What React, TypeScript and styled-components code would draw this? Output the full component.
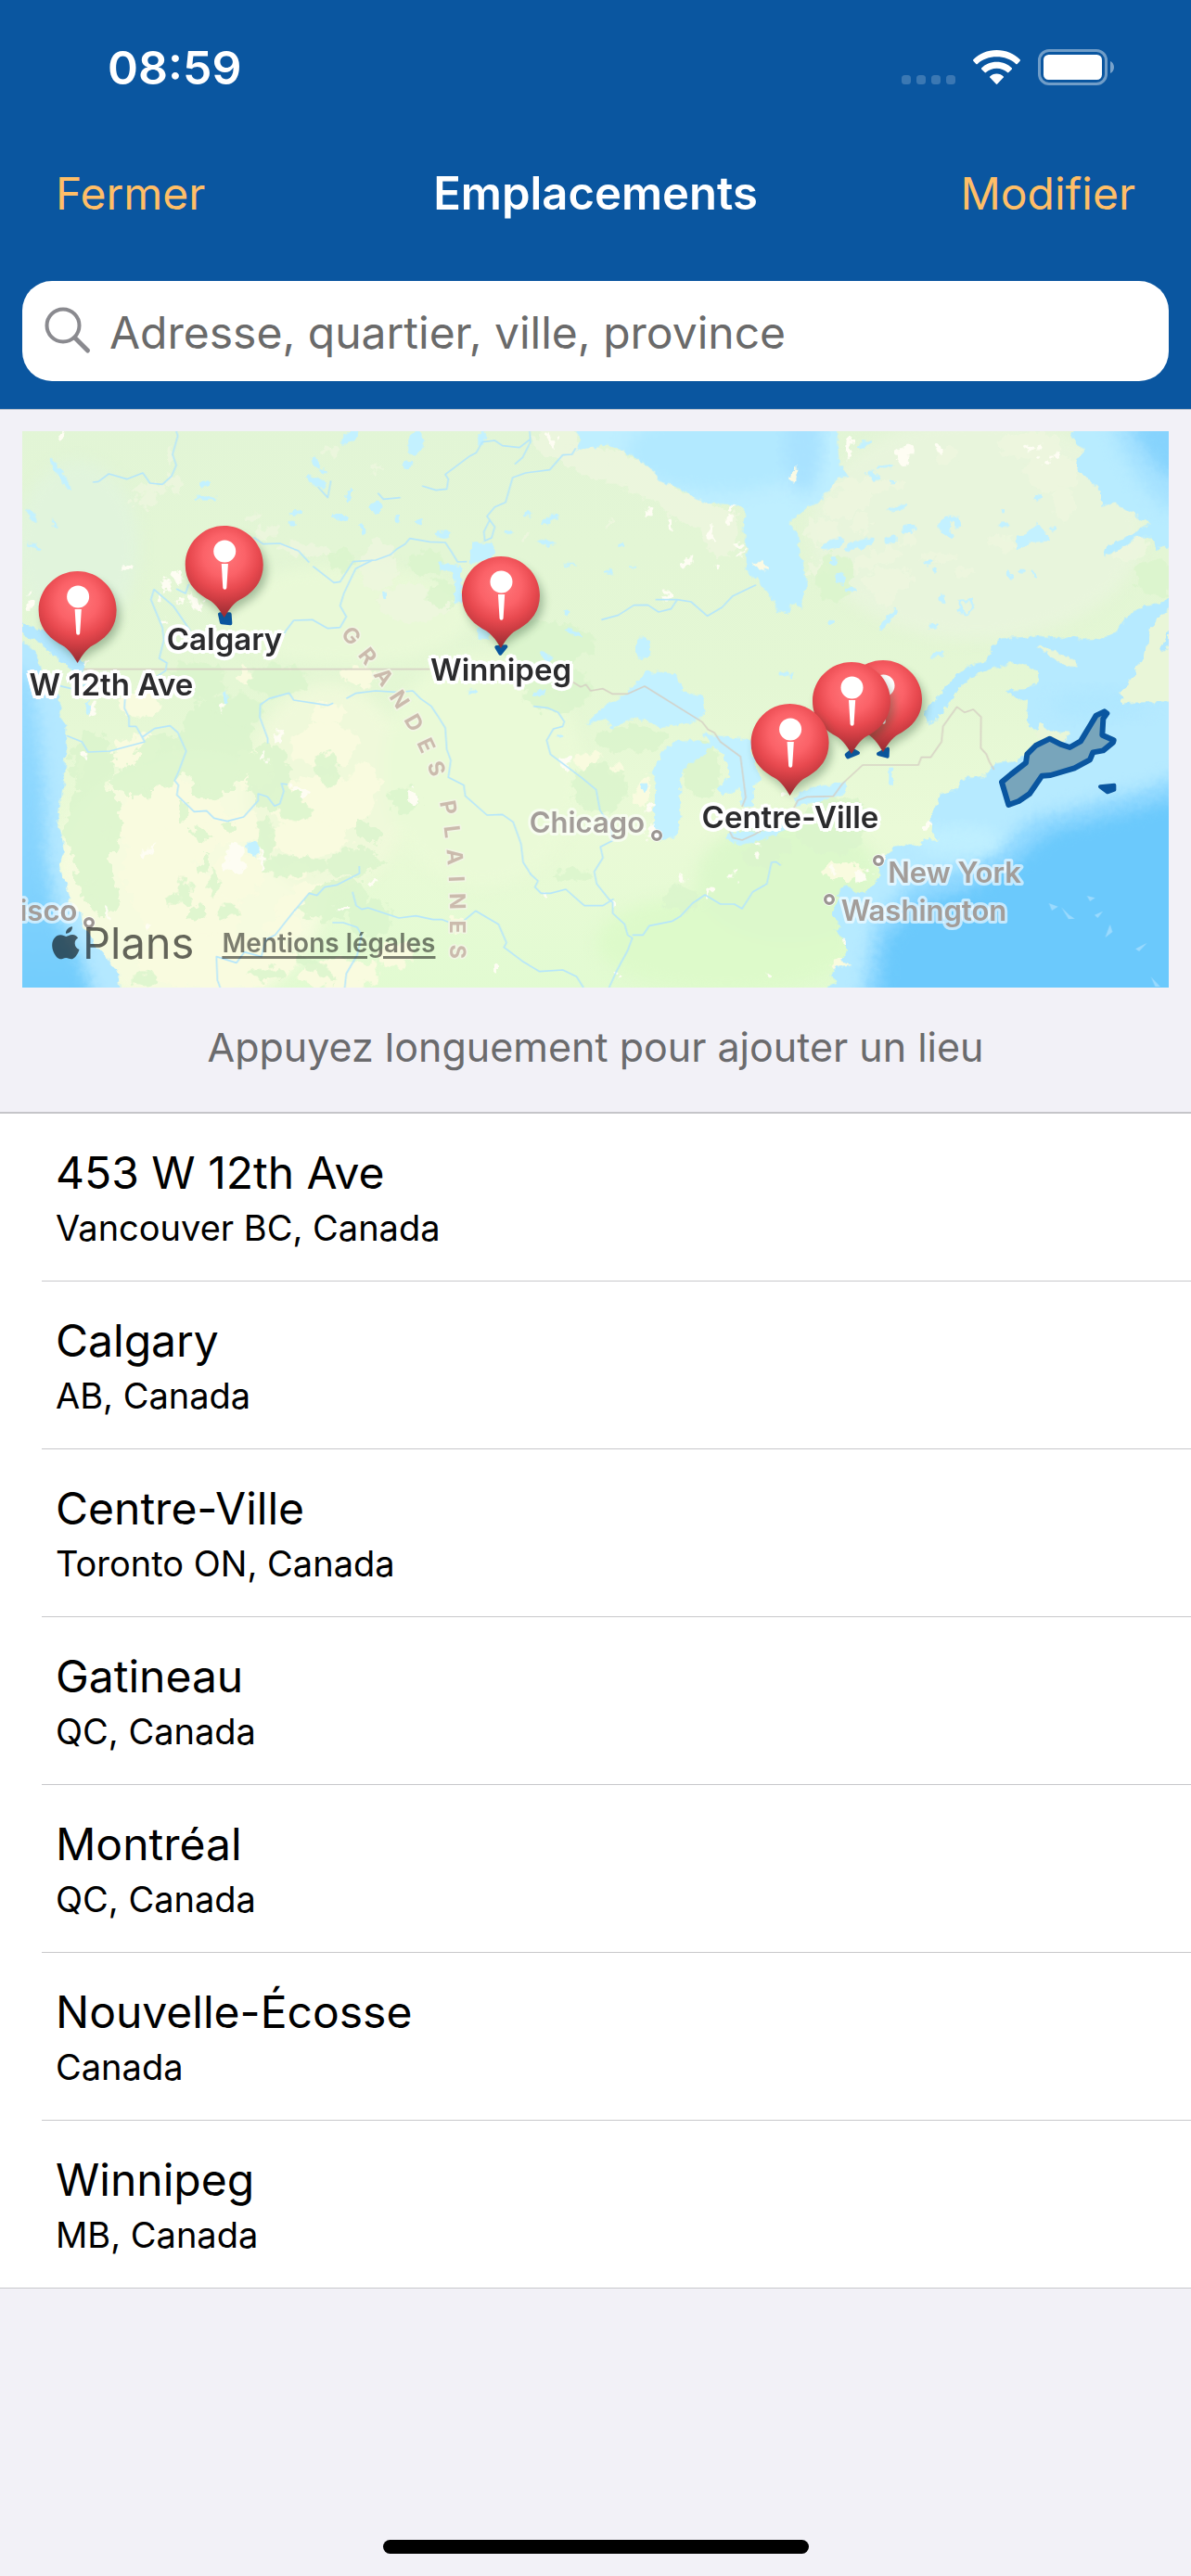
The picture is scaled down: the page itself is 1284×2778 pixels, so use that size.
import React from "react";
import styled, { createGlobalStyle } from "styled-components";

const GlobalStyle = createGlobalStyle`
  * { box-sizing: border-box; }
  body {
    margin: 0;
    background: #f2f1f7;
    font-family: Inter, "Liberation Sans", sans-serif;
    -webkit-font-smoothing: antialiased;
  }
  button, input { font: inherit; }
`;

const Screen = styled.main`
  display: flex;
  flex-direction: column;
  min-height: 100vh;
  background: #f2f1f7;
`;

const Header = styled.header`
  background: #0a56a0;
  border-bottom: 1px solid #b4bdcb;
  padding: 0 24px 30px;
`;

const StatusBar = styled.div`
  display: flex;
  justify-content: space-between;
  align-items: center;
  height: 144px;
  padding: 2px 58px 0 92px;
  color: #fff;
`;

const Clock = styled.time`
  font-size: 50px;
  font-weight: 600;
  line-height: 60px;
`;

const NavBar = styled.nav`
  display: grid;
  grid-template-columns: 1fr auto 1fr;
  align-items: center;
  height: 129px;
  margin-bottom: 30px;
  padding: 0 36px;
`;

const NavButton = styled.button<{ $end?: boolean }>`
  justify-self: ${(p) => (p.$end ? "end" : "start")};
  border: 0;
  padding: 0;
  background: none;
  color: #ffbe67;
  font-size: 48px;
  line-height: 60px;
  cursor: pointer;
`;

const Title = styled.h1`
  margin: 0;
  color: #fff;
  font-size: 49px;
  font-weight: 600;
  line-height: 60px;
`;

const SearchField = styled.label`
  display: flex;
  align-items: center;
  gap: 18px;
  height: 108px;
  padding: 0 24px;
  border-radius: 32px;
  background: #fff;
`;

const SearchInput = styled.input`
  flex: 1;
  min-width: 0;
  border: 0;
  outline: 0;
  padding: 3px 0 0;
  background: none;
  color: #000;
  font-size: 48px;
  line-height: 60px;
  &::placeholder { color: #6a6a6a; opacity: 1; }
`;

const MapSection = styled.section`
  padding: 23px 24px 0;
`;

const MapFrame = styled.div`
  position: relative;
  aspect-ratio: 1236 / 600;
  overflow: hidden;
`;

const MapCanvas = styled.svg`
  display: block;
  width: 100%;
  height: 100%;
`;

const Marker = styled.button<{ $x: number; $y: number }>`
  position: absolute;
  left: ${(p) => (p.$x / 1236) * 100}%;
  top: ${(p) => (p.$y / 600) * 100}%;
  transform: translateX(-50%);
  display: flex;
  flex-direction: column;
  align-items: center;
  border: 0;
  padding: 0;
  background: none;
  cursor: pointer;
`;

const MarkerLabel = styled.span`
  color: #2b2b2d;
  font-size: 33px;
  font-weight: 600;
  line-height: 46px;
  white-space: nowrap;
  text-shadow: 4px 0 #fff, -4px 0 #fff, 0 4px #fff, 0 -4px #fff, 3px 3px #fff,
    -3px 3px #fff, 3px -3px #fff, -3px -3px #fff, 0 0 3px #fff;
`;

const PartialLabel = styled(MarkerLabel)`
  padding-left: 72px;
`;

const Attribution = styled.div`
  position: absolute;
  left: 32px;
  bottom: 20px;
  display: flex;
  align-items: center;
  gap: 30px;
`;

const Brand = styled.span`
  display: flex;
  align-items: center;
  gap: 3px;
  color: rgba(0, 0, 0, 0.6);
  font-size: 47px;
  line-height: 56px;
`;

const LegalLink = styled.a`
  color: rgba(0, 0, 0, 0.5);
  font-size: 28px;
  font-weight: 600;
  line-height: 56px;
  text-decoration: underline;
  text-decoration-thickness: 3px;
  text-underline-offset: 4px;
`;

const Hint = styled.p`
  margin: 0;
  padding: 34px 24px 40px;
  color: #6b6b6d;
  font-size: 43px;
  line-height: 60px;
  text-align: center;
`;

const List = styled.ul`
  list-style: none;
  margin: 0;
  padding: 0;
  background: #fff;
  border-top: 2px solid #c5c5c9;
  border-bottom: 1px solid #c8c8cb;
`;

const Item = styled.li`
  margin-left: 45px;
  border-bottom: 1px solid #c8c8cb;
  &:last-child { border-bottom: 0; }
`;

const ItemButton = styled.button`
  display: block;
  width: 100%;
  border: 0;
  padding: 33px 15px 29px;
  background: none;
  color: #000;
  text-align: left;
  cursor: pointer;
`;

const ItemTitle = styled.span`
  display: block;
  font-size: 48px;
  line-height: 62px;
`;

const ItemSubtitle = styled.span`
  display: block;
  font-size: 38px;
  line-height: 56px;
`;

const HomeIndicator = styled.div`
  width: 459px;
  height: 15px;
  margin: auto auto 24px;
  border-radius: 8px;
  background: #000;
`;

/* ---------- icons ---------- */

const StatusIcons = () => (
  <svg width="230" height="40" viewBox="0 0 230 40" aria-hidden="true">
    <g fill="#fff" opacity="0.2">
      {[0, 16, 32, 48].map((x) => (
        <rect key={x} x={x} y="28" width="10" height="10" rx="3.5" />
      ))}
    </g>
    <g fill="#fff">
      <path d="M102.500 1C92.500 1 83.500 4.900 77.300 11.300Q76.700 12 77.300 12.700L80.300 15.900Q81 16.600 81.800 15.900C87.200 10.900 94.500 8.300 102.500 8.300S117.800 10.900 123.200 15.900Q124 16.600 124.700 15.900L127.700 12.700Q128.300 12 127.700 11.300C121.500 4.900 112.500 1 102.500 1Z" />
      <path d="M102.500 13.700C96 13.700 90.200 16.200 86.200 20.300Q85.600 21 86.200 21.700L89.600 25.100Q90.300 25.800 91 25.100C94 22.300 98 20.700 102.500 20.700S111 22.300 114 25.100Q114.700 25.800 115.400 25.100L118.800 21.700Q119.400 21 118.800 20.300C114.800 16.200 109 13.700 102.500 13.700Z" />
      <path d="M102.500 26.500C99.500 26.500 97 27.600 95.200 29.400Q94.700 30 95.200 30.600L101.800 37.600Q102.500 38.300 103.200 37.600L109.800 30.600Q110.300 30 109.800 29.400C108 27.600 105.500 26.500 102.500 26.500Z" />
      <rect x="153" y="6" width="63" height="27" rx="5.500" />
      <path opacity="0.45" d="M225 13C227.500 14 229 16.600 229 19.500S227.500 25 225 26Z" />
    </g>
    <rect x="148.500" y="1.500" width="72" height="36" rx="10.500" fill="none" stroke="#fff" strokeWidth="3" opacity="0.42" />
  </svg>
);

const SearchIcon = () => (
  <svg width="52" height="52" viewBox="0 0 52 52" fill="none" stroke="#8a8a8f" strokeLinecap="round" aria-hidden="true">
    <circle cx="20" cy="20" r="17.500" strokeWidth="4" />
    <path d="M33 33.500L46.500 47" strokeWidth="5" />
  </svg>
);

const AppleLogo = () => (
  <svg width="30" height="36" viewBox="0 0 30 36" fill="currentColor" aria-hidden="true">
    <path d="M22 0.300C22.300 4.300 18.900 8 15 7.700C14.600 4 18.200 0.700 22 0.300Z" />
    <path d="M28.100 12.500C25.500 14.100 24.600 16.100 24.700 18.500C24.800 21.600 26.600 23.800 29.500 25C28.500 28.300 25.600 34 22 35.200C19.500 35.800 17.900 34 15.200 34S10.900 35.700 8.600 35.300C4.500 34.300 0.400 27.200 0.200 21C0 14 4.300 9.400 9.200 9.300C11.800 9.300 13.700 10.900 15.300 10.900S19 9 22.200 9.100C24.800 9.300 26.700 10.400 28.100 12.500Z" />
  </svg>
);

const PinIcon = () => (
  <svg width="84" height="99" viewBox="0 0 84 99" overflow="visible" aria-hidden="true">
    <defs>
      <radialGradient id="pinRed" gradientUnits="userSpaceOnUse" cx="42" cy="32" r="64">
        <stop offset="0" stopColor="#ff777b" />
        <stop offset="0.350" stopColor="#fb6268" />
        <stop offset="0.580" stopColor="#e8494f" />
        <stop offset="0.740" stopColor="#cf3d43" />
        <stop offset="1" stopColor="#9c2e34" />
      </radialGradient>
      <filter id="pinShadow" x="-30%" y="-20%" width="170%" height="150%">
        <feGaussianBlur stdDeviation="5" />
      </filter>
    </defs>
    <path d="M46 8C69 8 88 27 88 48C88 64 79 75 66 83C56 89 50 92 44 98C38 92 31 88 26 83C13 75 4 64 4 48C4 27 23 8 46 8Z" fill="#28502d" opacity="0.350" filter="url(#pinShadow)" />
    <path d="M42 0C65 0 84 19 84 42C84 59 75 70 62 78C53 82 48 89 42 99C36 89 31 82 22 78C9 70 0 59 0 42C0 19 19 0 42 0Z" fill="url(#pinRed)" />
    <circle cx="42.500" cy="27.500" r="12" fill="#fff" />
    <path d="M39 41H46.200L44.600 67Q44.400 68.700 42.600 68.700T40.600 67Z" fill="#fff" />
  </svg>
);

/* ---------- map drawing ---------- */

type Blob = [number, number, number, number, number];

const lakes: Blob[] = [
  [195, 185, 10, 60, -32], [102, 318, 8, 28, -35], [176, 342, 6, 16, -35], [110, 418, 7, 24, -60],
  [662, 217, 14, 8, 0], [664, 261, 34, 8, 0], [1130, 66, 34, 14, -35], [1020, 145, 9, 22, -25],
  [1045, 174, 16, 7, 0], [1020, 208, 34, 14, 25], [1130, 252, 9, 22, 15], [1215, 290, 20, 18, -10],
  [1100, 323, 24, 12, 12], [958, 308, 18, 8, -20], [944, 342, 9, 7, 0], [1172, 365, 8, 20, 0],
  [1244, 577, 7, 10, 0], [730, 905, 7, 18, 0], [1345, 85, 24, 44, 12], [1320, 155, 16, 12, -40],
  [1560, 65, 12, 22, 10], [1285, 328, 8, 14, 0], [1355, 340, 12, 9, 0], [1430, 380, 26, 11, 0],
  [1708, 313, 16, 7, -15], [1780, 330, 28, 10, -30], [1646, 371, 12, 7, 0], [1765, 406, 28, 9, 12],
  [2008, 412, 12, 9, 0], [1846, 477, 24, 4, 0], [1967, 499, 14, 7, 0], [2045, 485, 14, 4, 0],
  [1830, 632, 10, 7, 0], [1858, 698, 28, 8, 35], [2080, 748, 26, 34, 0], [1526, 888, 16, 8, 0],
  [1764, 775, 26, 12, 40], [1745, 892, 24, 11, -10], [1810, 1030, 12, 6, 0], [2085, 1197, 10, 14, 0],
  [2534, 830, 16, 8, 0], [2795, 88, 28, 8, -22], [2824, 188, 26, 12, 25], [2860, 160, 34, 7, -12],
  [2884, 210, 10, 6, 0], [2906, 293, 34, 8, -12], [2940, 360, 26, 12, -18], [2882, 396, 22, 12, -10],
  [2690, 412, 40, 16, -20], [2780, 412, 50, 13, -18], [3246, 302, 9, 8, 0], [3246, 347, 16, 10, 0],
  [3358, 256, 14, 10, 0], [3404, 362, 12, 6, -15], [3004, 470, 12, 7, -20], [3025, 492, 9, 9, 0],
  [3264, 508, 8, 18, -35], [3305, 498, 13, 7, 0], [3345, 508, 6, 14, -35], [2718, 520, 15, 18, 0],
  [2700, 468, 9, 12, 0], [2752, 558, 20, 7, 0], [3048, 590, 8, 16, -30], [2690, 660, 10, 8, 0],
  [2872, 655, 10, 44, 38], [3017, 675, 16, 8, 0], [3032, 768, 22, 8, -20], [285, 940, 6, 26, 5],
  [818, 1395, 18, 28, -25], [2558, 838, 8, 5, 0],
];

const snow: Blob[] = [
  [198, 60, 14, 18, 0], [414, 486, 12, 12, 0], [575, 520, 12, 28, -25], [530, 545, 16, 22, 0],
  [630, 597, 30, 16, 30], [576, 592, 9, 8, 0], [536, 656, 8, 12, 0], [98, 567, 9, 7, 0],
  [102, 610, 14, 15, 0], [514, 584, 7, 9, 0], [268, 803, 18, 9, 0], [298, 940, 9, 30, 10],
  [280, 1090, 12, 12, 0], [1785, 70, 9, 22, -10], [2100, 312, 8, 16, 0], [2168, 345, 9, 22, -10],
  [2300, 370, 12, 22, 0], [2360, 290, 16, 9, 0], [2360, 328, 10, 14, 0], [2385, 412, 9, 10, 0],
  [2398, 440, 12, 6, 0], [2230, 465, 22, 10, -40], [2316, 480, 7, 14, 0], [2160, 572, 12, 12, 0],
  [2748, 98, 11, 40, 0], [2926, 115, 24, 32, 15], [3038, 95, 12, 18, 0], [3326, 102, 14, 9, 0],
  [3360, 98, 12, 14, 0], [3385, 140, 16, 16, 0], [3416, 124, 14, 9, 0], [714, 932, 8, 14, 0],
  [348, 1610, 8, 14, 20], [480, 1405, 10, 30, 40], [482, 1648, 7, 8, 0], [968, 1206, 26, 12, 15],
  [903, 1030, 10, 16, 0], [855, 1100, 6, 24, 0], [760, 1430, 30, 56, 0], [845, 1430, 7, 32, 0],
  [1110, 1590, 18, 9, 0], [1213, 1502, 9, 14, 0], [1828, 1123, 16, 20, -30], [1340, 1230, 14, 28, -20],
  [1755, 1550, 10, 9, 0], [1982, 1572, 12, 14, 0], [1605, 1783, 9, 12, 0], [2003, 1808, 8, 10, 0],
  [2485, 1802, 8, 11, 0], [2205, 1493, 11, 17, 30], [2294, 1530, 7, 14, 0], [2371, 1482, 8, 10, 0],
  [2445, 1384, 13, 8, 0], [2451, 1416, 9, 10, 0], [2110, 1335, 14, 34, 0], [2100, 1265, 14, 10, 0],
  [2785, 1484, 28, 18, -15], [2690, 1466, 10, 6, 0], [2844, 1430, 30, 12, -20], [2880, 1425, 24, 7, -10],
  [3002, 1320, 14, 12, 0], [2730, 1696, 9, 7, 0], [3762, 810, 10, 8, 0], [2545, 1225, 10, 10, 0],
];

const paleLand: Blob[] = [
  [490, 230, 60, 16, -5], [470, 272, 44, 22, -12], [565, 215, 14, 40, -20], [552, 130, 9, 30, 0],
  [810, 322, 30, 12, -20], [860, 375, 40, 20, 0], [1075, 108, 22, 16, 0], [1218, 167, 18, 12, 0],
  [1000, 430, 110, 18, 8], [1225, 480, 60, 80, 0], [1340, 600, 120, 60, 0], [1800, 80, 70, 50, 0],
  [1940, 150, 120, 55, 15], [2080, 200, 120, 50, 25], [2240, 300, 120, 45, 15], [2330, 370, 60, 80, 0],
  [1695, 384, 20, 8, -20], [1970, 340, 20, 6, -45], [2800, 220, 120, 22, 0], [2740, 280, 80, 40, -20],
  [2660, 370, 60, 40, 0], [2780, 345, 40, 28, 0], [2830, 460, 90, 24, -18], [2870, 530, 80, 44, 0],
  [2860, 590, 26, 26, 0], [2940, 390, 24, 36, 0], [2640, 490, 28, 22, 0], [3060, 120, 36, 30, 0],
  [3330, 90, 100, 44, 0], [3400, 180, 90, 60, 0], [3440, 280, 36, 50, 0], [3240, 405, 50, 22, 20],
  [3120, 505, 34, 16, 0], [3030, 455, 60, 12, 0], [3660, 430, 60, 28, -25],
];

const yellowLand: Blob[] = [
  [560, 1310, 180, 130, 0], [520, 1480, 120, 150, -10], [620, 1600, 160, 130, 0], [440, 1080, 80, 50, -20],
  [820, 1140, 60, 60, 0], [1050, 1060, 110, 70, 0], [1040, 1250, 170, 90, 0], [1000, 1360, 130, 60, 0],
  [760, 1330, 90, 50, 0], [770, 1480, 80, 80, 0], [700, 1760, 260, 90, 0], [960, 1560, 80, 34, -30],
  [960, 1470, 40, 26, 0], [920, 1650, 60, 40, 0], [1100, 1800, 130, 50, 0], [450, 930, 70, 40, 0],
  [1060, 960, 60, 34, 0], [790, 840, 16, 28, -10], [1160, 840, 60, 26, 10], [1180, 1180, 50, 60, 0],
  [1280, 1740, 60, 40, 0], [300, 1530, 16, 44, -25], [260, 1130, 16, 40, 0], [345, 1345, 20, 16, 30],
  [575, 1080, 18, 16, 0], [1480, 1640, 26, 22, 0], [1900, 1110, 46, 24, 0], [1990, 1140, 18, 22, 0],
  [2080, 1210, 24, 50, 20], [2730, 1470, 70, 30, 0], [2720, 1770, 30, 24, 0],
];

const greenLand: Blob[] = [
  [300, 1120, 70, 100, 0], [300, 1320, 90, 140, 0], [310, 1500, 60, 120, -20], [520, 1110, 80, 90, 0],
  [430, 1180, 70, 50, 0], [700, 1060, 120, 160, 0], [680, 1190, 60, 50, 0], [870, 1160, 70, 110, 0],
  [950, 1260, 60, 44, 35], [860, 1360, 24, 70, 0], [950, 1450, 110, 32, 0], [1140, 1440, 90, 44, -10],
  [1080, 1560, 110, 60, -20], [1200, 1620, 70, 60, 0], [590, 1280, 14, 32, 0], [645, 1350, 34, 12, 20],
  [740, 1330, 26, 14, 0], [660, 1450, 14, 42, 20], [640, 1600, 20, 32, 25], [560, 1560, 18, 24, -30],
  [600, 1540, 26, 44, 0], [690, 1510, 14, 50, 0], [740, 1600, 34, 24, 0], [1020, 1780, 80, 20, 30],
  [860, 1800, 60, 22, 0], [470, 1820, 40, 26, 0], [640, 850, 90, 60, 0], [900, 850, 100, 50, 0],
  [770, 950, 80, 50, 0], [1190, 1340, 50, 24, 40], [1060, 1140, 34, 60, -20], [1760, 730, 160, 70, 0],
  [1800, 880, 110, 80, 0], [1430, 570, 50, 44, 0], [1100, 460, 36, 34, 0], [1380, 470, 60, 40, 0],
  [1940, 1200, 90, 80, 0], [2270, 1140, 60, 90, 0], [2040, 1040, 120, 40, 0], [2480, 1400, 80, 50, -20],
  [2700, 1320, 120, 90, -20], [2200, 1560, 60, 40, 0], [2700, 520, 60, 80, 0], [3740, 520, 70, 60, 0],
  [1850, 1480, 60, 20, 0], [1310, 1240, 50, 40, 0],
];

const rivers = [
  "M570 45L575 60 558 120 570 155 555 190 525 217 485 213 462 180 410 200 352 183 318 208 300 210",
  "M820 388L850 410 905 408 965 432 1000 470",
  "M1012 482L1080 535 1100 532 1142 467 1215 462 1262 445 1285 425 1310 410 1325 392 1390 403 1440 405 1460 435 1480 468 1510 467",
  "M1205 462L1150 490 1112 570 1100 610 1120 645 1100 680 1060 683 1010 655 950 657 925 690 915 710",
  "M1070 205L1060 260 1028 225", "M1222 245L1240 265 1295 260",
  "M610 540L600 570 570 555", "M615 690L560 610 498 557 488 590 525 680 530 720 515 780 540 795 535 820 490 850",
  "M190 868L240 880 285 860", "M405 905L402 940 417 970 417 1000 440 1000 460 1035 468 1050 355 1080 285 1083 265 1050 215 1030",
  "M460 1035L500 1007 550 998 575 1020 602 1080 580 1140 565 1175 577 1190 572 1222 628 1276 668 1273 692 1297 735 1307 788 1293 835 1240 835 1218 865 1228 888 1258 905 1250 918 1210 910 1185 930 1188",
  "M866 1055L866 1040 840 970 842 930 870 910 935 892 950 915 1060 932 1078 925",
  "M1120 910L1150 893 1215 885 1290 890 1335 885 1360 910 1395 935 1415 965 1440 1005 1445 1075 1458 1110 1450 1165 1500 1190 1505 1225 1575 1287 1625 1285 1660 1310 1685 1380 1692 1440 1718 1480 1740 1500 1730 1520 1750 1540 1780 1540 1830 1527 1850 1545 1890 1580 1950 1580 1985 1558",
  "M1162 1452L1163 1475 1115 1500 1090 1513 1050 1520 1025 1547 1000 1540 945 1605 890 1675 860 1690 845 1745 790 1730 765 1765 700 1745 703 1820 712 1845",
  "M1140 1535L1152 1580 1170 1592 1190 1587 1290 1620 1345 1613 1400 1625 1430 1625 1450 1633 1495 1633 1538 1597 1612 1640 1638 1700 1630 1715 1690 1760 1745 1793 1820 1788 1865 1810 1887 1845",
  "M1075 1635L1110 1635 1155 1650 1170 1675 1155 1740 1120 1800 1115 1845",
  "M1725 935L1770 940 1805 955 1825 985 1820 1000 1790 1008 1768 1045 1780 1090 1820 1120 1880 1165 1928 1205 1940 1270 1975 1325 1980 1370 1942 1390 1950 1425 1922 1470 1930 1510 1970 1560 1982 1570 1982 1605 2020 1640 2030 1675 2045 1685 2030 1725 1995 1790 1970 1845",
  "M2045 1675L2080 1675 2100 1645 2175 1630 2200 1615 2240 1572 2280 1545 2330 1575 2375 1575 2400 1590 2435 1535 2480 1510 2495 1440 2510 1438 2525 1450",
  "M1862 100L1850 120 1820 122 1778 170 1700 180 1658 195 1635 275 1600 290 1575 320 1600 355 1590 390 1568 400 1565 370 1585 330",
  "M1713 45L1716 80 1690 130 1665 152", "M1716 70L1680 98 1625 92 1600 75 1560 80 1540 115 1520 125 1440 185 1450 200 1445 232 1410 236 1365 222",
  "M2445 542L2370 578 2335 615 2288 643 2235 597 2190 590 2120 590", "M2190 590L2170 620 2130 630 2095 607 2050 608 2000 640 1945 655",
];

const borders = [
  "M270 815H1390", "M1850 855L1878 872 1895 865 1910 885 1950 878 1980 895 2030 895 2085 870 2270 985 2290 1010 2310 1020 2330 1050 2395 1098 2412 1230 2400 1260",
  "M2360 1340L2370 1360 2400 1368 2440 1350 2540 1290 2565 1270 2580 1240 2610 1228 2695 1226 2725 1185 2790 1125 2970 1125 2980 1100 3010 1100 3045 1050 3050 1000 3095 937 3120 955 3148 945 3173 970 3172 1070 3190 1090 3200 1115 3215 1140",
];

const cities: { name: string; x: number; y: number; dot: [number, number]; end?: boolean }[] = [
  { name: "isco", x: 250, y: 1628, dot: [288, 1635], end: true },
  { name: "Chicago", x: 1712, y: 1345, dot: [2124, 1353] },
  { name: "New York", x: 2872, y: 1507, dot: [2841, 1434] },
  { name: "Washington", x: 2720, y: 1630, dot: [2682, 1560] },
];

const blobs = (items: Blob[]) =>
  items.map(([x, y, rx, ry, r], i) => (
    <ellipse key={i} cx={x} cy={y} rx={rx} ry={ry} transform={`rotate(${r} ${x} ${y})`} />
  ));

const NorthAmerica = () => (
  <MapCanvas viewBox="72 45 3708 1800" role="img" aria-label="Carte du Canada et des États-Unis">
    <defs>
      <linearGradient id="land" x1="0" y1="0" x2="0" y2="1">
        <stop offset="0" stopColor="#e2f5d6" />
        <stop offset="0.450" stopColor="#e4f7d4" />
        <stop offset="0.700" stopColor="#eafad7" />
        <stop offset="1" stopColor="#e1fbd1" />
      </linearGradient>
      <linearGradient id="pacific" x1="0" y1="0" x2="0" y2="1">
        <stop offset="0" stopColor="#9adcff" />
        <stop offset="0.500" stopColor="#87d4fe" />
        <stop offset="1" stopColor="#6ccafb" />
      </linearGradient>
      <filter id="soft" x="-20%" y="-20%" width="140%" height="140%" colorInterpolationFilters="sRGB"><feGaussianBlur stdDeviation="24" /></filter>
      <filter id="ragged" filterUnits="userSpaceOnUse" x="0" y="0" width="3900" height="1900" colorInterpolationFilters="sRGB">
        <feTurbulence type="fractalNoise" baseFrequency="0.030" numOctaves="3" seed="8" />
        <feDisplacementMap in="SourceGraphic" scale="56" xChannelSelector="R" yChannelSelector="G" />
      </filter>
      <filter id="coast" filterUnits="userSpaceOnUse" x="0" y="0" width="3900" height="1900" colorInterpolationFilters="sRGB">
        <feTurbulence type="fractalNoise" baseFrequency="0.050" numOctaves="2" seed="3" />
        <feDisplacementMap in="SourceGraphic" scale="24" xChannelSelector="R" yChannelSelector="G" />
      </filter>
      <clipPath id="bay"><path d="M1862 20L1865 45 1875 80 1862 110 1900 100 1960 88 2050 125 2120 180 2130 205 2210 235 2280 278 2340 280 2405 290 2410 320 2400 360 2415 410 2410 490 2450 530 2500 590 2520 630 2545 635 2570 600 2595 620 2590 590 2610 550 2600 490 2585 430 2580 375 2555 345 2560 325 2640 280 2680 240 2710 195 2740 190 2715 150 2700 20Z" /></clipPath>
      <clipPath id="labradorShape"><path d="M3480 20L3465 60 3485 75 3475 85 3510 105 3480 145 3490 180 3510 190 3560 240 3565 290 3600 275 3630 295 3680 320 3720 345 3690 360 3675 375 3630 395 3580 415 3570 450 3610 430 3660 400 3680 385 3725 385 3735 430 3755 415 3800 428V20Z" /></clipPath>
      <clipPath id="atlanticShape"><path d="M2990 950L3030 910 3070 860 3100 830 3140 800 3190 790 3210 740 3240 715 3350 710 3410 715 3480 712 3500 720 3585 712 3610 690 3650 640 3690 615 3740 605 3800 580V1900H2640L2670 1845 2715 1825 2680 1810 2700 1780 2750 1770 2715 1755 2740 1730 2730 1690 2700 1660 2720 1650 2690 1600 2715 1560 2710 1530 2740 1515 2765 1535 2800 1540 2840 1490 2850 1440 2895 1390 2980 1380 2990 1365 3040 1368 3010 1345 3015 1280 3040 1220 3100 1200 3110 1170 3190 1160 3215 1120 3290 1110 3320 1085 3390 1035 3370 1010 3340 1010 3320 980 3330 910 3290 915 3250 885 3310 880 3360 855 3355 820 3320 800 3270 795 3200 815 3140 845 3100 880 3070 920 3030 980 3000 990Z" /></clipPath>
      <clipPath id="pacificShape"><path d="M40 700L72 720 110 750 150 850 180 880 200 940 190 960 215 1000 210 1130 200 1220 185 1310 210 1400 190 1450 220 1530 230 1580 260 1600 270 1650 320 1720 385 1800 392 1900H40Z" /></clipPath>
    </defs>

    <rect x="0" y="0" width="3900" height="1900" fill="url(#land)" />
    <g filter="url(#soft)">
      <ellipse cx="620" cy="1500" rx="440" ry="420" fill="#f6fbdf" />
      <ellipse cx="1060" cy="1200" rx="260" ry="340" fill="#eff9da" />
      <ellipse cx="1120" cy="640" rx="400" ry="160" fill="#e9f9d7" />
      <ellipse cx="1560" cy="1140" rx="320" ry="380" fill="#eafad7" />
      <ellipse cx="3160" cy="360" rx="540" ry="360" fill="#e8f5dc" />
      <ellipse cx="250" cy="420" rx="200" ry="280" fill="#e1f4dc" />
      <ellipse cx="2350" cy="1700" rx="420" ry="160" fill="#ddfaca" />
      <ellipse cx="2550" cy="1500" rx="300" ry="200" fill="#dcf8cb" />
    </g>
    <g filter="url(#ragged)">
      <g fill="#f9fbdf">{blobs(yellowLand)}</g>
      <g fill="#eef7df" opacity="0.800">{blobs(paleLand)}</g>
      <g fill="#dbf5cd" opacity="0.850">{blobs(greenLand)}</g>
      <g fill="#fefdf3">{blobs(snow)}</g>
    </g>

    <g filter="url(#coast)">
      <g clipPath="url(#bay)">
        <rect x="1840" y="0" width="920" height="660" fill="#bfefff" />
        <ellipse cx="2330" cy="110" rx="300" ry="130" fill="#b2e9ff" filter="url(#soft)" />
        <ellipse cx="2600" cy="60" rx="60" ry="190" fill="#a9e2ff" filter="url(#soft)" />
      </g>
      <g clipPath="url(#labradorShape)">
        <rect x="3440" y="0" width="400" height="480" fill="#b8ecff" />
        <path filter="url(#soft)" fill="#a6e2ff" d="M3560 -60L3620 100 3680 200 3760 290 3950 340V-60Z" />
        <path filter="url(#soft)" fill="#86d3fd" d="M3620 -60L3690 90 3760 180 3950 260V-60Z" />
      </g>
      <g clipPath="url(#atlanticShape)">
        <rect x="2600" y="560" width="1300" height="1400" fill="#b6eaff" />
        <path filter="url(#soft)" fill="#8fd8ff" d="M3980 1090L3700 1200 3550 1240 3330 1300 3230 1400 3100 1460 2950 1500 2830 1630 2760 2000H3980Z" />
        <path filter="url(#soft)" fill="#6bc9fc" d="M3980 1190L3600 1290 3400 1340 3280 1440 3130 1530 2960 1580 2860 1700 2830 2000H3980Z" />
        <ellipse cx="3100" cy="1370" rx="140" ry="50" fill="#bfefff" filter="url(#soft)" />
        <ellipse cx="3560" cy="930" rx="160" ry="50" fill="#b0e7ff" filter="url(#soft)" />
      </g>
      <g clipPath="url(#pacificShape)">
        <rect x="40" y="700" width="400" height="1200" fill="#b4e8ff" />
        <path filter="url(#soft)" fill="url(#pacific)" d="M-80 760L100 840 120 960 145 1200 150 1420 180 1600 260 1740 340 2000H-80Z" />
      </g>
      <g fill="#c3f1ff">
        <path fill="#b4e8ff" d="M72 665L130 690 170 705 240 750 275 815 245 830 200 790 140 740 72 700Z" />
        <path d="M1895 995L1950 940 2020 900 2090 820 2130 825 2190 830 2210 890 2270 900 2280 960 2270 975 2140 1005 2060 970 1980 1005 1960 975Z" />
        <path d="M2140 1080L2180 1050 2250 1045 2310 1060 2270 1100 2220 1130 2200 1170 2200 1310 2180 1360 2130 1370 2115 1310 2120 1160 2105 1150 2130 1110Z" />
        <path d="M2270 1020L2330 1030 2430 1045 2430 1080 2460 1170 2440 1190 2435 1260 2400 1260 2390 1200 2340 1225 2320 1200 2360 1160 2340 1090 2300 1060Z" />
        <path d="M2350 1360L2390 1385 2460 1370 2550 1330 2530 1315 2460 1340 2360 1340Z" />
        <path d="M2570 1230L2610 1200 2740 1180 2730 1220 2630 1250 2570 1260Z" />
        <path d="M2875 1130L2890 1130 2884 1190 2875 1190Z" />
        <path d="M1525 405L1590 405 1605 440 1585 465 1520 470ZM1420 470L1490 480 1495 600 1475 600 1465 500 1425 495ZM1548 680L1590 690 1582 720 1550 715Z" />
        <path d="M3030 350L3060 320 3105 320 3112 355 3098 360 3076 335 3070 370 3090 385 3075 395 3050 375Z" />
        <path d="M3290 390L3330 370 3355 340 3370 360 3395 400 3330 405 3310 420 3290 435Z" />
        {blobs(lakes)}
      </g>
      <g fill="#e9f6d8">
        <path d="M3800 600L3755 640 3720 680 3700 780 3680 800 3660 850 3625 890 3630 925 3750 920 3800 920Z" />
        <path d="M3350 738L3410 755 3470 785 3490 808 3450 806 3400 775Z" />
        <path d="M3350 1035L3362 990 3385 1010 3420 1015 3465 1020 3440 1050 3390 1052Z" />
        <path fill="#fbfae4" d="M2430 468L2470 468 2485 495 2440 482ZM2572 160L2582 165 2568 215 2552 205Z" />
      </g>
      <path fill="#b4e8ff" d="M3750 750L3780 690V740L3755 760Z" />
      <path d="M3105 598L3140 590 3150 618 3125 640 3105 625Z" fill="none" stroke="#c3f1ff" strokeWidth="8" />
    </g>

    <g fill="none" strokeLinejoin="round">
      <g stroke="#d5cdc2" strokeWidth="5" opacity="0.850">{borders.map((d) => <path key={d} d={d} />)}</g>
      <g stroke="#b6e6fb" strokeWidth="5">{rivers.map((d) => <path key={d} d={d} />)}</g>
    </g>

    <g fill="#c9ecff" opacity="0.500">
      <path d="M3392 1572L3422 1583 3402 1596ZM3432 1585L3458 1610 3476 1622 3456 1624ZM3515 1548L3542 1555 3525 1566ZM3540 1610L3567 1598 3550 1620ZM3590 1640L3598 1665 3574 1684ZM3672 1720L3710 1700 3684 1728ZM3722 1810L3752 1842 3736 1842Z" />
    </g>

    <g stroke="#0a56a0" strokeWidth="18" strokeLinejoin="round">
      <path fill="#78a5bb" d="M3262 1254L3240 1180 3270 1155 3318 1118 3322 1090 3350 1062 3395 1040 3430 1058 3460 1068 3495 1048 3530 990 3545 965 3572 952 3580 958 3568 975 3565 1028 3602 1045 3600 1052 3568 1078 3535 1084 3525 1108 3475 1135 3398 1158 3370 1160 3330 1218 3295 1242Z" />
      <g fill="#0a56a0" strokeWidth="12">
        <path d="M3558 1195L3582 1213 3604 1205V1190Z" />
        <path d="M711 637L743 637 745 667 717 664Z" />
        <path d="M1606 744L1636 742 1618 764Z" />
        <path d="M2738 1092L2757 1076 2775 1086 2742 1099Z" />
        <path d="M2841 1089L2871 1073 2870 1097Z" />
      </g>
    </g>

    <path id="plainsUpper" d="M1100 702C1200 820 1330 985 1394 1160C1404 1188 1412 1215 1420 1245" fill="none" />
    <path id="plainsLower" d="M1421 1245C1444 1350 1466 1560 1452 1840" fill="none" />
    <g fontFamily="Inter, sans-serif" strokeLinejoin="round">
      <g fontSize="70" fontWeight="700" fill="#cbbbad" stroke="#f1f6e4" strokeWidth="10" letterSpacing="35" paintOrder="stroke">
        <text><textPath href="#plainsUpper">GRANDES</textPath></text>
        <text><textPath href="#plainsLower">PLAINES</textPath></text>
      </g>
      {cities.map((c) => (
        <g key={c.name}>
          <circle cx={c.dot[0]} cy={c.dot[1]} r="20" fill="#fff" />
          <circle cx={c.dot[0]} cy={c.dot[1]} r="13" fill="none" stroke="#9b9591" strokeWidth="10" />
          <text x={c.x} y={c.y} textAnchor={c.end ? "end" : "start"} fontSize="93" fontWeight="600" fill="#a39d99" stroke="#fff" strokeOpacity="0.600" strokeWidth="18" paintOrder="stroke">
            {c.name}
          </text>
        </g>
      ))}
    </g>
  </MapCanvas>
);

/* ---------- data ---------- */

const markers = [
  { name: "Calgary", label: "Calgary", x: 218, y: 102 },
  { name: "453 W 12th Ave", label: "W 12th Ave", x: 60, y: 151, beside: true },
  { name: "Winnipeg", label: "Winnipeg", x: 516, y: 135 },
  { name: "Montréal", label: "", x: 928, y: 247 },
  { name: "Gatineau", label: "", x: 894, y: 249 },
  { name: "Centre-Ville", label: "Centre-Ville", x: 828, y: 294 },
];

const places = [
  ["453 W 12th Ave", "Vancouver BC, Canada"],
  ["Calgary", "AB, Canada"],
  ["Centre-Ville", "Toronto ON, Canada"],
  ["Gatineau", "QC, Canada"],
  ["Montréal", "QC, Canada"],
  ["Nouvelle-Écosse", "Canada"],
  ["Winnipeg", "MB, Canada"],
];

export default function App() {
  return (
    <Screen>
      <GlobalStyle />
      <Header>
        <StatusBar>
          <Clock>08:59</Clock>
          <StatusIcons />
        </StatusBar>
        <NavBar>
          <NavButton type="button">Fermer</NavButton>
          <Title>Emplacements</Title>
          <NavButton type="button" $end>Modifier</NavButton>
        </NavBar>
        <SearchField>
          <SearchIcon />
          <SearchInput
            type="text"
            aria-label="Rechercher un lieu"
            placeholder="Adresse, quartier, ville, province"
          />
        </SearchField>
      </Header>

      <MapSection>
        <MapFrame>
          <NorthAmerica />
          {markers.map((m) => (
            <Marker key={m.name} type="button" aria-label={m.name} $x={m.x} $y={m.y}>
              <PinIcon />
              {m.label && (m.beside ? <PartialLabel>{m.label}</PartialLabel> : <MarkerLabel>{m.label}</MarkerLabel>)}
            </Marker>
          ))}
          <Attribution>
            <Brand>
              <AppleLogo />
              Plans
            </Brand>
            <LegalLink href="#mentions">Mentions légales</LegalLink>
          </Attribution>
        </MapFrame>
      </MapSection>

      <Hint>Appuyez longuement pour ajouter un lieu</Hint>

      <List>
        {places.map(([title, subtitle]) => (
          <Item key={title}>
            <ItemButton type="button">
              <ItemTitle>{title}</ItemTitle>
              <ItemSubtitle>{subtitle}</ItemSubtitle>
            </ItemButton>
          </Item>
        ))}
      </List>

      <HomeIndicator />
    </Screen>
  );
}
